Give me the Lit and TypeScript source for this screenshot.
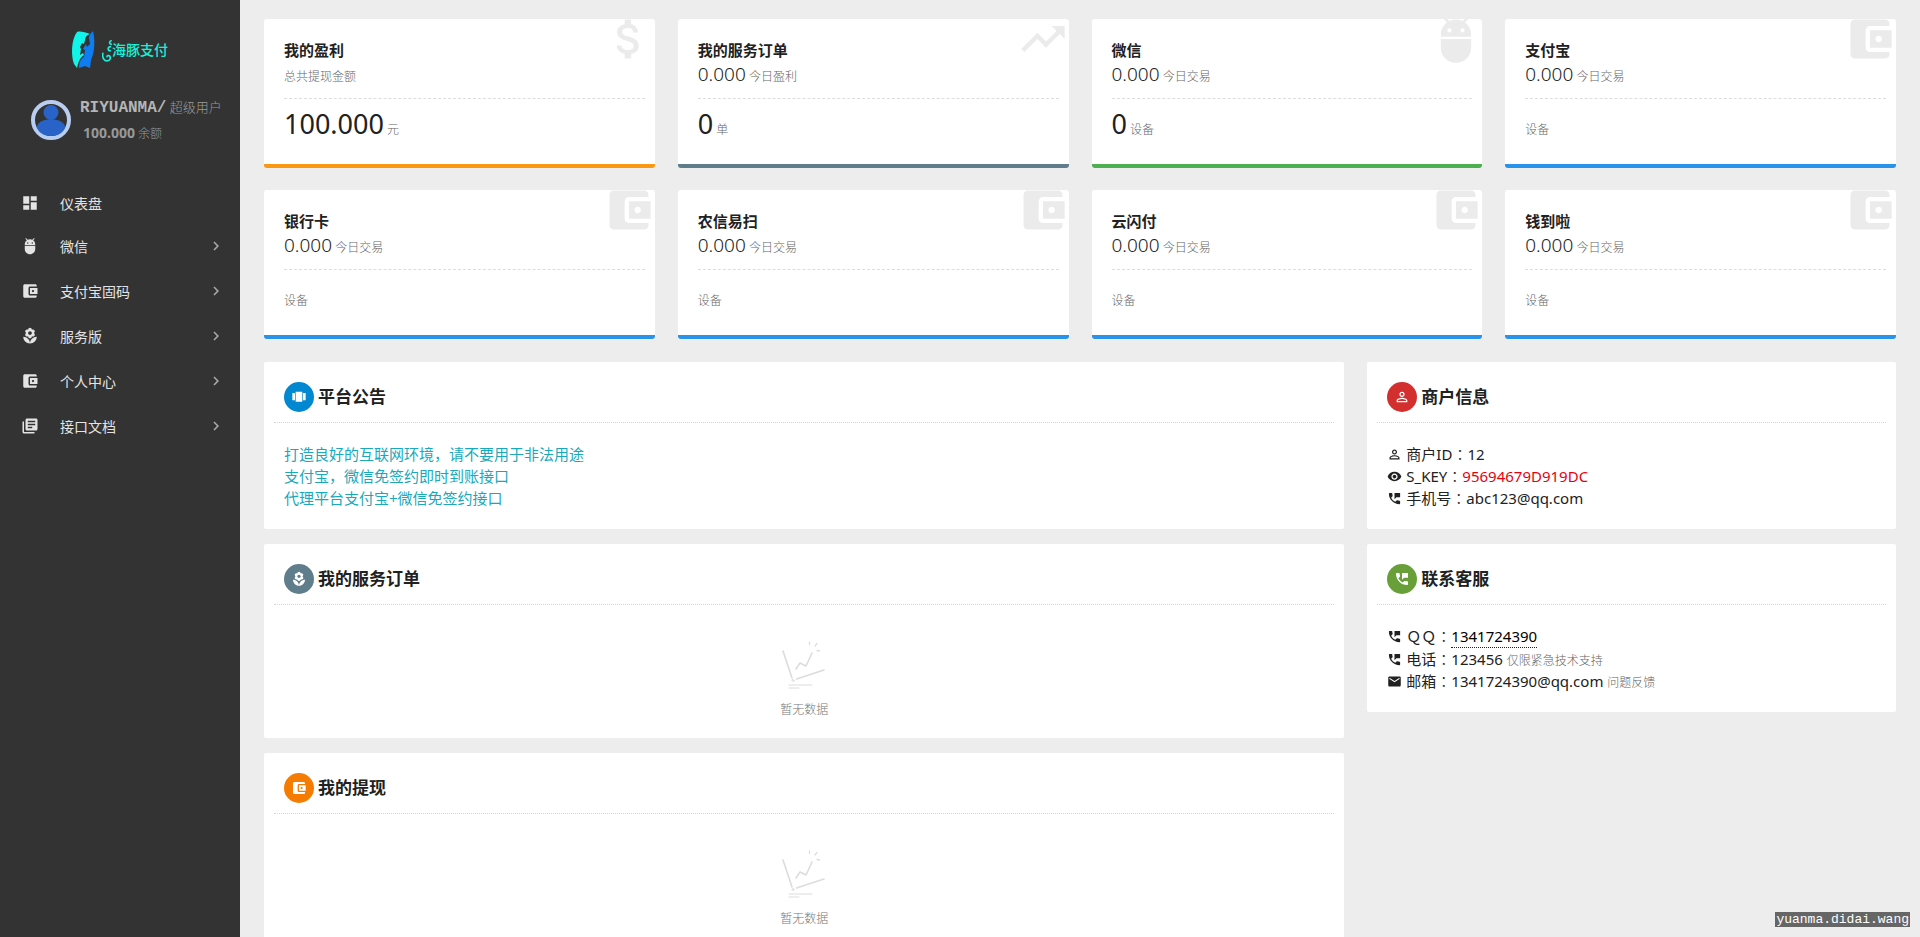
import { LitElement, html, css, svg, nothing } from "lit";
import { customElement, property } from "lit/decorators.js";

const ICONS: Record<string, string> = {
  dashboard: "M3 13h8V3H3v10zm0 8h8v-6H3v6zm10 0h8V11h-8v10zm0-18v6h8V3h-8z",
  adb: "M5 16c0 3.87 3.13 7 7 7s7-3.13 7-7v-4H5v4zM16.12 4.37l2.1-2.1-.82-.83-2.3 2.31C14.16 3.28 13.12 3 12 3s-2.16.28-3.09.75L6.6 1.44l-.82.83 2.1 2.1C6.14 5.64 5 7.68 5 10v1h14v-1c0-2.32-1.14-4.36-2.88-5.63zM9 9c-.55 0-1-.45-1-1s.45-1 1-1 1 .45 1 1-.45 1-1 1zm6 0c-.55 0-1-.45-1-1s.45-1 1-1 1 .45 1 1-.45 1-1 1z",
  wallet: "M21 18v1c0 1.1-.9 2-2 2H5c-1.11 0-2-.9-2-2V5c0-1.1.89-2 2-2h14c1.1 0 2 .9 2 2v1h-9c-1.11 0-2 .9-2 2v8c0 1.1.89 2 2 2h9zm-9-2h10V8H12v8zm4-2.5c-.83 0-1.5-.67-1.5-1.5s.67-1.5 1.5-1.5 1.5.67 1.5 1.5-.67 1.5-1.5 1.5z",
  florist: "M12 22c4.97 0 9-4.03 9-9-4.97 0-9 4.03-9 9zM5.6 10.25c0 1.38 1.12 2.5 2.5 2.5.53 0 1.01-.16 1.42-.44l-.02.19c0 1.38 1.12 2.5 2.5 2.5s2.5-1.12 2.5-2.5l-.02-.19c.4.28.89.44 1.42.44 1.38 0 2.5-1.12 2.5-2.5 0-1-.59-1.85-1.43-2.25.84-.4 1.43-1.25 1.43-2.25 0-1.38-1.12-2.5-2.5-2.5-.53 0-1.01.16-1.42.44l.02-.19C14.5 2.12 13.38 1 12 1S9.5 2.12 9.5 3.5l.02.19c-.4-.28-.89-.44-1.42-.44-1.38 0-2.5 1.12-2.5 2.5 0 1 .59 1.85 1.43 2.25-.84.4-1.43 1.25-1.43 2.25zM12 5.5c1.38 0 2.5 1.12 2.5 2.5s-1.12 2.5-2.5 2.5S9.5 9.38 9.5 8s1.12-2.5 2.5-2.5zM3 13c0 4.97 4.03 9 9 9 0-4.97-4.03-9-9-9z",
  books: "M4 6H2v14c0 1.1.9 2 2 2h14v-2H4V6zm16-4H8c-1.1 0-2 .9-2 2v12c0 1.1.9 2 2 2h12c1.1 0 2-.9 2-2V4c0-1.1-.9-2-2-2zm-1 9H9V9h10v2zm-4 4H9v-2h6v2zm4-8H9V5h10v2z",
  money: "M11.8 10.9c-2.27-.59-3-1.2-3-2.15 0-1.09 1.01-1.85 2.7-1.85 1.78 0 2.44.85 2.5 2.1h2.21c-.07-1.72-1.12-3.3-3.21-3.81V3h-3v2.16c-1.94.42-3.5 1.68-3.5 3.61 0 2.31 1.91 3.46 4.7 4.13 2.5.6 3 1.48 3 2.41 0 .69-.49 1.79-2.7 1.79-2.06 0-2.87-.92-2.98-2.1h-2.2c.12 2.19 1.76 3.42 3.68 3.83V21h3v-2.15c1.95-.37 3.5-1.5 3.5-3.55 0-2.84-2.43-3.81-4.7-4.4z",
  trend: "M16 6l2.29 2.29-4.88 4.88-4-4L2 16.59 3.41 18l6-6 4 4 6.3-6.29L22 12V6z",
  carousel: "M7 19h10V4H7v15zm-5-2h4V6H2v11zM18 6v11h4V6h-4z",
  phone: "M20 15.5c-1.25 0-2.45-.2-3.57-.57-.35-.11-.74-.03-1.02.24l-2.2 2.2c-2.83-1.44-5.15-3.75-6.59-6.58l2.2-2.21c.28-.27.36-.66.25-1.01C8.7 6.45 8.5 5.25 8.5 4c0-.55-.45-1-1-1H4c-.55 0-1 .45-1 1 0 9.39 7.61 17 17 17 .55 0 1-.45 1-1v-3.5c0-.55-.45-1-1-1zM12 3v10l3-3h6V3h-9z",
  person: "M12 5.9c1.16 0 2.1.94 2.1 2.1s-.94 2.1-2.1 2.1S9.9 9.16 9.9 8s.94-2.1 2.1-2.1m0 9c2.97 0 6.1 1.46 6.1 2.1v1.1H5.9V17c0-.64 3.13-2.1 6.1-2.1M12 4C9.79 4 8 5.79 8 8s1.79 4 4 4 4-1.79 4-4-1.79-4-4-4zm0 9c-2.67 0-8 1.34-8 4v3h16v-3c0-2.66-5.33-4-8-4z",
  eye: "M12 4.5C7 4.5 2.73 7.61 1 12c1.73 4.39 6 7.5 11 7.5s9.27-3.11 11-7.5c-1.73-4.39-6-7.5-11-7.5zM12 17c-2.76 0-5-2.24-5-5s2.24-5 5-5 5 2.24 5 5-2.24 5-5 5zm0-8c-1.66 0-3 1.34-3 3s1.34 3 3 3 3-1.34 3-3-1.34-3-3-3z",
  email: "M20 4H4c-1.1 0-1.99.9-1.99 2L2 18c0 1.1.9 2 2 2h16c1.1 0 2-.9 2-2V6c0-1.1-.9-2-2-2zm0 4l-8 5-8-5V6l8 5 8-5v2z",
  chevron: "M10 6L8.59 7.41 13.17 12l-4.58 4.59L10 18l6-6z",
};

@customElement("md-icon")
export class MdIcon extends LitElement {
  @property() name = "";

  static styles = css`
    :host {
      display: inline-block;
      flex: none;
      width: 18px;
      height: 18px;
    }
    .glyph {
      display: block;
      width: 100%;
      height: 100%;
      fill: currentColor;
    }
  `;

  render() {
    return html`<svg class="glyph" viewBox="0 0 24 24" aria-hidden="true">
      ${svg`<path d=${ICONS[this.name] ?? ""}></path>`}
    </svg>`;
  }
}

@customElement("stat-card")
export class StatCard extends LitElement {
  @property() heading = "";
  @property() icon = "wallet";
  @property() accent = "blue";
  @property() amount = "";
  @property() note = "";
  @property() total = "";
  @property() unit = "";

  static styles = css`
    :host {
      display: block;
      min-width: 0;
    }
    .card {
      position: relative;
      overflow: hidden;
      padding: 19px 10px 15px 20px;
      background: #fff;
      border-bottom: 4px solid #2893e9;
      border-radius: 3px;
      color: #212121;
    }
    .orange { border-bottom-color: #fb9812; }
    .slate { border-bottom-color: #607d8b; }
    .green { border-bottom-color: #4caf50; }
    .mark {
      position: absolute;
      top: -6px;
      right: 0;
      width: 52px;
      height: 52px;
      color: #ebebeb;
    }
    .heading {
      margin: 0;
      font-size: 15px;
      line-height: 24px;
      font-weight: 700;
    }
    .amount {
      margin: 0;
      padding-bottom: 12px;
      border-bottom: 1px dashed #ddd;
      font-size: 19px;
      line-height: 24px;
      font-weight: 300;
    }
    .total {
      margin: 0;
      font-size: 27px;
      line-height: 50px;
    }
    small {
      font-size: 12px;
      line-height: 12px;
      font-weight: 300;
      color: #666;
    }
  `;

  render() {
    return html`
      <article class="card ${this.accent}">
        <md-icon class="mark" name=${this.icon}></md-icon>
        <h2 class="heading">${this.heading}</h2>
        <p class="amount">${this.amount}<small> ${this.note}</small></p>
        <p class="total">${this.total}<small> ${this.unit}</small></p>
      </article>
    `;
  }
}

@customElement("info-panel")
export class InfoPanel extends LitElement {
  @property() heading = "";
  @property() icon = "";
  @property() tone = "";

  static styles = css`
    :host {
      display: block;
      background: #fff;
      border-radius: 2px;
    }
    .head {
      display: flex;
      align-items: center;
      gap: 4px;
      margin: 0 10px;
      padding: 20px 10px 10px;
      border-bottom: 1px dotted #d4d4d4;
    }
    .badge {
      display: flex;
      align-items: center;
      justify-content: center;
      width: 30px;
      height: 30px;
      border-radius: 50%;
      color: #fff;
    }
    .badge md-icon {
      width: 16px;
      height: 16px;
    }
    .blue { background: #0288d1; }
    .slate { background: #607d8b; }
    .orange { background: #f57c00; }
    .red { background: #d32f2f; }
    .green { background: #689f38; }
    .heading {
      margin: 0;
      font-size: 17px;
      line-height: 24px;
      font-weight: 700;
      color: #212121;
    }
    .body {
      padding: 20px;
    }
  `;

  render() {
    return html`
      <section>
        <header class="head">
          <span class="badge ${this.tone}"><md-icon name=${this.icon}></md-icon></span>
          <h2 class="heading">${this.heading}</h2>
        </header>
        <div class="body"><slot></slot></div>
      </section>
    `;
  }
}

@customElement("empty-state")
export class EmptyState extends LitElement {
  static styles = css`
    :host {
      display: flex;
      flex-direction: column;
      align-items: center;
      gap: 13px;
      padding: 14px 0 0;
    }
    .chart {
      width: 50px;
      height: 50px;
      fill: none;
      stroke: #dcdcdc;
      stroke-linecap: round;
      stroke-linejoin: round;
    }
    .text {
      margin: 0;
      font-size: 12px;
      line-height: 16px;
      font-weight: 300;
      color: #777;
    }
  `;

  render() {
    return html`
      <svg class="chart" viewBox="0 0 50 50" aria-hidden="true">
        <path stroke-width="1.6" d="M4 12l9 27M17.500 40L45 31"></path>
        <circle cx="14" cy="41.500" r="1" stroke-width="1"></circle>
        <path stroke-width="1.600" d="M17 30l4-6 6 3 6-13"></path>
        <path stroke-width="1.300" d="M30.500 3v2.500M38 4.500l-2 2.500M38 11.500l2.500 .5"></path>
        <path stroke-width="1" d="M10 46h23M10 49h10"></path>
      </svg>
      <p class="text">暂无数据</p>
    `;
  }
}

interface MenuEntry {
  label: string;
  icon: string;
  expandable: boolean;
}

const MENU: MenuEntry[] = [
  { label: "仪表盘", icon: "dashboard", expandable: false },
  { label: "微信", icon: "adb", expandable: true },
  { label: "支付宝固码", icon: "wallet", expandable: true },
  { label: "服务版", icon: "florist", expandable: true },
  { label: "个人中心", icon: "wallet", expandable: true },
  { label: "接口文档", icon: "books", expandable: true },
];

const STATS = [
  { heading: "我的盈利", icon: "money", accent: "orange", amount: "", note: "总共提现金额", total: "100.000", unit: "元" },
  { heading: "我的服务订单", icon: "trend", accent: "slate", amount: "0.000", note: "今日盈利", total: "0", unit: "单" },
  { heading: "微信", icon: "adb", accent: "green", amount: "0.000", note: "今日交易", total: "0", unit: "设备" },
  ...["支付宝", "银行卡", "农信易扫", "云闪付", "钱到啦"].map((heading) => ({
    heading, icon: "wallet", accent: "blue", amount: "0.000", note: "今日交易", total: "", unit: "设备",
  })),
];

@customElement("app-root")
export class AppRoot extends LitElement {
  static styles = css`
    :host {
      display: grid;
      grid-template-columns: 240px minmax(0, 1fr);
      height: 100vh;
      background: #ededed;
      color: #212121;
      font-family: "Noto Sans", "Noto Sans CJK SC", sans-serif;
      font-size: 15px;
    }
    .sidebar {
      background: #333;
      color: #e4e4e4;
    }
    .brand {
      display: flex;
      align-items: center;
      padding: 30px 0 0 71px;
      color: #14f1dc;
      text-decoration: none;
    }
    .dolphin {
      width: 24px;
      height: 40px;
    }
    .swirl {
      width: 10px;
      height: 34px;
      margin-left: 7px;
    }
    .wordmark {
      font-size: 14px;
      line-height: 24px;
      font-weight: 500;
      white-space: nowrap;
    }
    .user {
      display: flex;
      align-items: center;
      gap: 9px;
      padding: 25px 0 0 31px;
    }
    .avatar {
      flex: none;
      width: 40px;
      height: 40px;
    }
    .who {
      font-size: 13px;
      line-height: 25px;
      font-weight: 300;
      color: #999;
      white-space: nowrap;
    }
    .who p {
      height: 25px;
      margin: 0;
    }
    .name {
      font-family: "Liberation Mono", monospace;
      font-size: 16px;
      font-weight: 700;
      color: #b5b5b5;
    }
    .balance {
      padding-left: 3px;
      font-size: 12px;
    }
    .balance b {
      font-size: 14px;
      font-weight: 700;
    }
    .menu {
      margin: 0;
      padding: 37px 0 0;
      list-style: none;
    }
    .link {
      display: flex;
      align-items: center;
      gap: 21px;
      height: 45px;
      padding: 0 15px 0 21px;
      font-size: 14px;
      color: inherit;
      text-decoration: none;
    }
    .link.plain {
      height: 41px;
    }
    .label {
      flex: 1;
    }
    .arrow {
      color: #aaa;
    }
    .main {
      overflow-y: auto;
      scrollbar-width: none;
      padding: 19px 24px 0;
    }
    .stats {
      display: grid;
      grid-template-columns: repeat(4, minmax(0, 1fr));
      gap: 22px 23px;
    }
    .panels {
      display: grid;
      grid-template-columns: repeat(12, minmax(0, 1fr));
      column-gap: 23px;
      align-items: start;
      padding: 23px 0 15px;
    }
    .column {
      display: grid;
      gap: 15px;
    }
    .wide { grid-column: span 8; }
    .narrow { grid-column: span 4; }
    .rows {
      margin: 0;
      padding: 0;
      list-style: none;
      line-height: 22px;
    }
    .notice {
      color: #19a9bb;
    }
    .row {
      display: flex;
      align-items: center;
      gap: 4px;
    }
    .row md-icon {
      width: 15px;
      height: 15px;
    }
    .colon {
      font-family: "Noto Sans CJK TC", sans-serif;
      line-height: 15px;
      font-weight: 300;
    }
    .secret {
      color: #e60012;
    }
    .qq {
      display: inline-block;
      border-bottom: 1px dotted #212121;
      color: #000;
      text-decoration: none;
    }
    small {
      font-size: 12px;
      line-height: 12px;
      font-weight: 300;
      color: #666;
    }
    .host {
      position: fixed;
      right: 10px;
      bottom: 10px;
      padding: 0 1px;
      background: #666;
      color: #fff;
      font-family: "Liberation Mono", monospace;
      font-size: 13px;
      line-height: 15px;
    }
  `;

  private entry(item: MenuEntry) {
    return html`<li>
      <a class="link ${item.expandable ? "" : "plain"}" href="#">
        <md-icon name=${item.icon}></md-icon>
        <span class="label">${item.label}</span>
        ${item.expandable ? html`<md-icon class="arrow" name="chevron"></md-icon>` : nothing}
      </a>
    </li>`;
  }

  private row(icon: string, label: string, value: unknown) {
    return html`<li class="row">
      <md-icon name=${icon}></md-icon>
      <span>${label}<span class="colon">：</span>${value}</span>
    </li>`;
  }

  render() {
    return html`
      <aside class="sidebar">
        <a class="brand" href="#">
          <svg class="dolphin" viewBox="0 0 24 40" aria-hidden="true">
            <path fill="#12f4ea" d="M6 2c3-1 8 0 13 2-3 1-5 3-5 6l-1 4-2-1-2 4 1 2-1 6 3-2 1 2c-3 2-5 5-6 9l-1 4-3-4C0 26 0 10 6 2z"></path>
            <path fill="#0f7df2" d="M22 1c2 9 2 20-2 29l-1 8-5-2-6 2c0-6 2-9 5-11l1-7-2-1 3-5 1 3 3-3-1-6c0-3 2-5 4-7z"></path>
          </svg>
          <svg class="swirl" viewBox="0 0 12 34" aria-hidden="true">
            <path fill="none" stroke="#14f1dc" stroke-width="2" stroke-linecap="round" d="M11 6c-3 1-2 4 0 4M10 13c-4 1-3 5 0 5M1 21c-1 6 2 9 5 9 4 0 5-4 3-6-1-1-3 0-3 1"></path>
          </svg>
          <span class="wordmark">海豚支付</span>
        </a>
        <div class="user">
          <svg class="avatar" viewBox="0 0 40 40" aria-hidden="true">
            <circle cx="20" cy="20" r="18" fill="#333" stroke="#b9cdf0" stroke-width="4"></circle>
            <circle cx="20" cy="12.500" r="7.500" fill="#2a63c8"></circle>
            <path fill="#2a63c8" d="M5.500 27C8 21 13 19.500 20 19.500S32 21 34.500 27C32 33 27 36 20 36S8 33 5.500 27z"></path>
          </svg>
          <div class="who">
            <p><span class="name">RIYUANMA/</span> 超级用户</p>
            <p class="balance"><b>100.000</b> 余额</p>
          </div>
        </div>
        <nav>
          <ul class="menu">${MENU.map((item) => this.entry(item))}</ul>
        </nav>
      </aside>

      <main class="main">
        <div class="stats">
          ${STATS.map((s) => html`<stat-card
            heading=${s.heading} icon=${s.icon} accent=${s.accent}
            amount=${s.amount} note=${s.note} total=${s.total} unit=${s.unit}
          ></stat-card>`)}
        </div>
        <div class="panels">
          <div class="column wide">
            <info-panel heading="平台公告" icon="carousel" tone="blue">
              <ul class="rows notice">
                <li>打造良好的互联网环境，请不要用于非法用途</li>
                <li>支付宝，微信免签约即时到账接口</li>
                <li>代理平台支付宝+微信免签约接口</li>
              </ul>
            </info-panel>
            <info-panel heading="我的服务订单" icon="florist" tone="slate"><empty-state></empty-state></info-panel>
            <info-panel heading="我的提现" icon="wallet" tone="orange"><empty-state></empty-state></info-panel>
          </div>
          <div class="column narrow">
            <info-panel heading="商户信息" icon="person" tone="red">
              <ul class="rows">
                ${this.row("person", "商户ID", "12")}
                ${this.row("eye", "S_KEY", html`<span class="secret">95694679D919DC</span>`)}
                ${this.row("phone", "手机号", "abc123@qq.com")}
              </ul>
            </info-panel>
            <info-panel heading="联系客服" icon="phone" tone="green">
              <ul class="rows">
                ${this.row("phone", "ＱＱ", html`<a class="qq" href="#">1341724390</a>`)}
                ${this.row("phone", "电话", html`123456 <small>仅限紧急技术支持</small>`)}
                ${this.row("email", "邮箱", html`1341724390@qq.com <small>问题反馈</small>`)}
              </ul>
            </info-panel>
          </div>
        </div>
      </main>
      <div class="host">yuanma.didai.wang</div>
    `;
  }
}
